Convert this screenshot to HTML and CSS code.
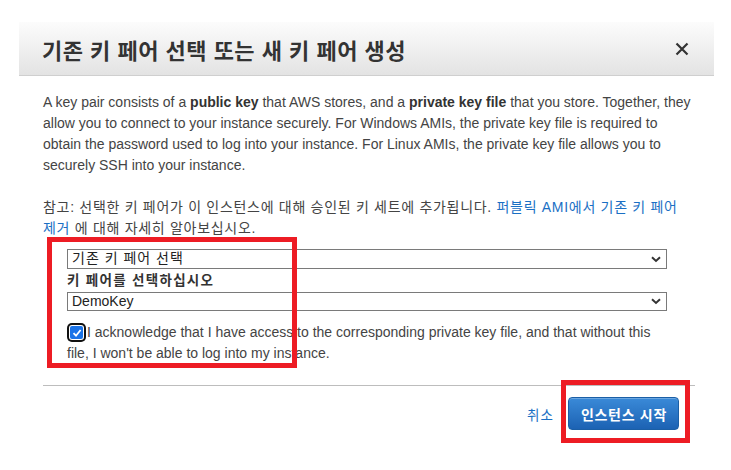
FILE: index.html
```html
<!DOCTYPE html>
<html lang="ko">
<head>
<meta charset="utf-8">
<title>키 페어</title>
<link rel="stylesheet" href="styles.css">
</head>
<body>
<div class="dialog">
  <div class="header">
    <h1 class="title">기존 키 페어 선택 또는 새 키 페어 생성</h1>
    <svg class="close" width="14" height="14" viewBox="0 0 14 14"><path d="M1.5 1.5 L12.5 12.5 M12.5 1.5 L1.5 12.5" stroke="#333" stroke-width="2.2" fill="none"/></svg>
  </div>
  <div class="content">
    <p class="intro">A key pair consists of a <b>public key</b> that AWS stores, and a <b>private key file</b> that you store. Together, they allow you to connect to your instance securely. For Windows AMIs, the private key file is required to obtain the password used to log into your instance. For Linux AMIs, the private key file allows you to securely SSH into your instance.</p>
    <p class="note">참고: 선택한 키 페어가 이 인스턴스에 대해 승인된 키 세트에 추가됩니다. <a class="link" href="#">퍼블릭 AMI에서 기존 키 페어 제거</a> 에 대해 자세히 알아보십시오.</p>
    <div class="form">
      <div class="select ko">기존 키 페어 선택</div>
      <div class="label">키 페어를 선택하십시오</div>
      <div class="select">DemoKey</div>
      <p class="ack"><span class="cb"><svg width="12" height="12" viewBox="0 0 12 12"><path d="M2.5 6.2 L5 8.7 L9.6 3" stroke="#fff" stroke-width="1.8" fill="none"/></svg></span>I acknowledge that I have access to the corresponding private key file, and that without this file, I won't be able to log into my instance.</p>
    </div>
    <div class="footer">
      <a class="cancel" href="#">취소</a>
      <button class="launch">인스턴스 시작</button>
    </div>
  </div>
</div>
<div class="mark mark-form"></div>
<div class="mark mark-btn"></div>
</body>
</html>
```
FILE: styles.css
```css
html, body {
  margin: 0;
  padding: 0;
  background: #fff;
}
body {
  font-family: "Liberation Sans", Arial, "Noto Sans CJK KR", sans-serif;
  color: #444;
  font-size: 14px;
  position: relative;
  width: 731px;
  height: 470px;
  overflow: hidden;
}
.dialog {
  margin: 22px 0 0 19px;
  width: 695px;
}
.header {
  height: 53px;
  border-bottom: 1px solid #cfcfcf;
  background: linear-gradient(#fcfcfc, #e3e3e3);
  display: flex;
  align-items: center;
  justify-content: space-between;
  padding: 0 25px 0 24px;
}
.title {
  margin: 0 0 0 -1px;
  font-size: 22px;
  letter-spacing: 0.5px;
  font-weight: bold;
  color: #333;
  font-family: "Liberation Sans", "Noto Sans CJK KR", sans-serif;
}
.close {
  display: block;
  margin-top: 1px;
}
.content {
  padding: 0 21px 0 24px;
}
.intro {
  margin: 16px 0 0;
  line-height: 21px;
}
.intro b {
  color: #333;
}
.note {
  margin: 21px 0 0;
  line-height: 21px;
  letter-spacing: 0.7px;
  word-break: keep-all;
}
.link {
  color: #1a6fc4;
  text-decoration: none;
}
.form {
  padding: 0 26px 0 24px;
  margin-top: 10px;
}
.select {
  height: 17px;
  border: 1px solid #7a7a7a;
  line-height: 17px;
  padding: 0 4px;
  color: #222;
  background: #fff url("data:image/svg+xml;utf8,<svg xmlns='http://www.w3.org/2000/svg' width='10' height='7' viewBox='0 0 10 7'><path d='M1 1.3 L5 5 L9 1.3' stroke='%23333' stroke-width='2' fill='none'/></svg>") no-repeat right 5px center;
}
.select.ko {
  letter-spacing: 1px;
  height: 18px;
}
.label {
  font-weight: bold;
  font-size: 13.5px;
  letter-spacing: 1.3px;
  color: #333;
  line-height: 22px;
  margin-top: 1px;
}
.ack {
  margin: 11px 0 0;
  line-height: 21px;
}
.cb {
  display: inline-block;
  width: 13px;
  height: 13px;
  background: #1a73e8;
  border-radius: 2px;
  box-shadow: 0 0 0 1px #fff, 0 0 0 3px #111;
  margin: 0 4px 0 3px;
  vertical-align: -2px;
}
.cb svg {
  display: block;
  margin: 0.5px;
}
.footer {
  margin-top: 21px;
  border-top: 1px solid #bdbdbd;
  display: flex;
  justify-content: flex-end;
  align-items: center;
  gap: 14px;
  padding: 11px 16px 0 0;
  margin-right: -2px;
}
.cancel {
  color: #1a6fc4;
  text-decoration: none;
  font-size: 13.5px;
  letter-spacing: 1px;
}
.launch {
  height: 33px;
  padding: 0 11px 0 12px;
  border: 1px solid #1b5fa6;
  border-radius: 4px;
  background: linear-gradient(#3a8ad8, #1c62b3);
  color: #fff;
  font-family: "Liberation Sans", "Noto Sans CJK KR", sans-serif;
  font-weight: bold;
  font-size: 14px;
  letter-spacing: 0.7px;
  box-shadow: inset 0 1px 0 rgba(255,255,255,0.25);
}
.mark {
  position: absolute;
  border: 5px solid #ed1c24;
  box-sizing: border-box;
}
.mark-form {
  left: 47px;
  top: 237px;
  width: 250px;
  height: 131px;
}
.mark-btn {
  left: 561px;
  top: 380px;
  width: 129px;
  height: 63px;
}
```
